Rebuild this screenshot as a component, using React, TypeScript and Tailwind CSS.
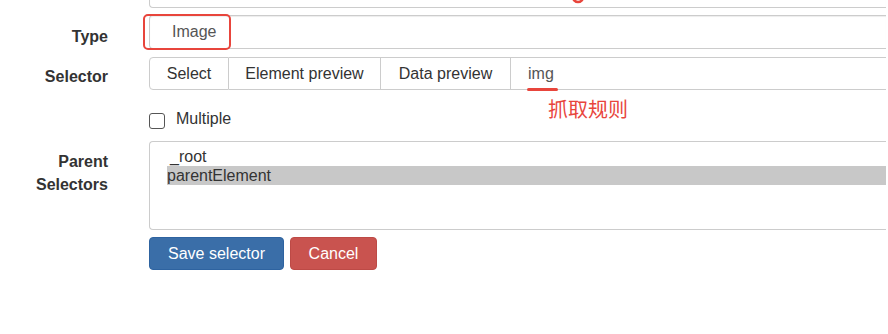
import React from 'react'

const labelCls = 'w-[108px] shrink-0 text-right font-bold text-[16px] text-[#333]'
const inputCls =
  'flex-1 h-[34px] border border-r-0 border-[#ccc] rounded-l-[4px] bg-white shadow-[inset_0_1px_1px_rgba(0,0,0,0.075)] pl-[22px] text-[16px] text-[#555] flex items-center'

export default function App() {
  return (
    <div
      className="w-[888px] h-[334px] overflow-hidden bg-white relative"
      style={{ fontFamily: '"Liberation Sans", Arial, sans-serif' }}
    >
      {/* bit of an annotation cut off at the top */}
      <svg className="absolute left-[571px] top-[-9px]" width="14" height="14" viewBox="0 0 14 14">
        <ellipse cx="7" cy="6" rx="5" ry="5" fill="none" stroke="#e8453c" strokeWidth="2.6" />
      </svg>

      <div className="w-[886px] flex flex-col mt-[-26px]">
        {/* Id */}
        <div className="flex">
          <label className={`${labelCls} pt-[11px] leading-[20px]`}>Id</label>
          <div className="ml-[41px] flex-1 flex">
            <div className={inputCls}>image</div>
          </div>
        </div>

        {/* Type */}
        <div className="flex mt-[7px]">
          <label className={`${labelCls} pt-[12px] leading-[20px]`}>Type</label>
          <div className="ml-[41px] flex-1 flex relative">
            <div className={inputCls}>Image</div>
            <div className="absolute left-[-6px] top-[-1px] w-[88px] h-[36px] border-2 border-[#e8453c] rounded-[5px]" />
          </div>
        </div>

        {/* Selector */}
        <div className="flex mt-[8px]">
          <label className={`${labelCls} pt-[10px] leading-[20px]`}>Selector</label>
          <div className="ml-[41px] flex-1 flex h-[33px] text-[16px] text-[#333]">
            <button className="w-[80px] border border-[#ccc] rounded-l-[4px] bg-white">Select</button>
            <button className="w-[152px] border border-l-0 border-[#ccc] bg-white">Element preview</button>
            <button className="w-[130px] border border-l-0 border-[#ccc] bg-white">Data preview</button>
            <div className="flex-1 border border-l-0 border-r-0 border-[#ccc] bg-white flex items-center pl-[17px] text-[#555] relative">
              img
              <span className="absolute left-[16px] bottom-[-2px] w-[31px] h-[3px] rounded-full bg-[#e8453c]" />
              <span
                className="absolute left-[37px] top-[41px] text-[20px] leading-[20px] text-[#e8453c] whitespace-nowrap"
                style={{ fontFamily: '"Noto Sans CJK SC", sans-serif' }}
              >
                抓取规则
              </span>
            </div>
          </div>
        </div>

        {/* Multiple */}
        <div className="flex mt-[22px]">
          <div className="w-[108px] shrink-0" />
          <label className="ml-[41px] flex items-start gap-[11px] text-[16px] text-[#333]">
            <span className="w-[16px] h-[16px] mt-[1px] border border-[#555] rounded-[3px] bg-white" />
            <span className="leading-[16px] mt-[-1px]">Multiple</span>
          </label>
        </div>

        {/* Parent Selectors */}
        <div className="flex mt-[12px]">
          <label className={`${labelCls} pt-[9px] leading-[23px]`}>
            Parent
            <br />
            Selectors
          </label>
          <div className="ml-[41px] flex-1 h-[89px] border border-r-0 border-[#ccc] rounded-l-[4px] bg-white pt-[5px] pl-[17px] text-[16px] text-[#333] leading-[19px]">
            <div className="pl-[3px]">_root</div>
            <div className="bg-[#c8c8c8]">parentElement</div>
          </div>
        </div>

        {/* Buttons */}
        <div className="flex mt-[7px]">
          <div className="w-[108px] shrink-0" />
          <div className="ml-[41px] flex gap-[6px] text-[16px] text-white">
            <button className="w-[135px] h-[33px] rounded-[4px] bg-[#3a6ea8] border border-[#2e63a0]">Save selector</button>
            <button className="w-[87px] h-[33px] rounded-[4px] bg-[#c9534f] border border-[#bd4a46]">Cancel</button>
          </div>
        </div>
      </div>
    </div>
  )
}
